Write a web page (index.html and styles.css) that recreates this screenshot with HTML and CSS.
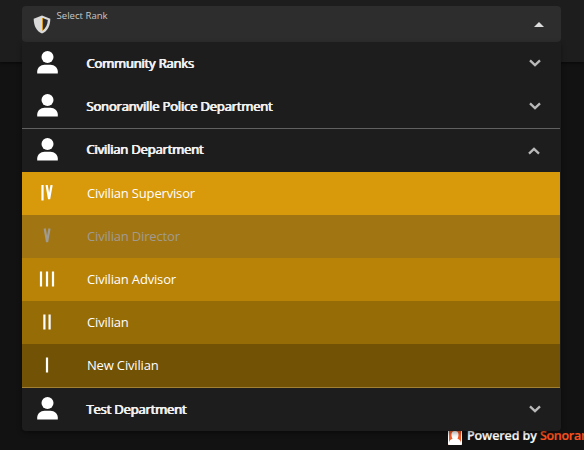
FILE: index.html
```html
<!DOCTYPE html>
<html lang="en">
<head>
<meta charset="utf-8">
<title>Select Rank</title>
<link rel="stylesheet" href="styles.css">
</head>
<body>
<svg class="defs" aria-hidden="true">
  <symbol id="person" viewBox="0 0 21 23"><circle cx="10.500" cy="6" r="6"/><path d="M.2 22.600v-2C.2 16.600 3.500 13.700 7.500 13.700h6c4 0 7.300 2.900 7.300 6.900v2z"/></symbol>
  <symbol id="chevron" viewBox="0 0 12 8"><path d="M1 1.400l5 4.800 5-4.800" fill="none" stroke="currentColor" stroke-width="2.300"/></symbol>
</svg>
<header class="topbar"></header>
<main class="select">
  <div class="field">
    <svg class="shield" viewBox="0 0 18 19"><path d="M9 .5l8.300 3.200C17.300 10.500 14.800 16 9 18.500 3.200 16 .7 10.500.7 3.700z" fill="#d9d9d9"/><path d="M9.500 3l5.300 2.100c-.2 4.500-1.900 8.200-5.300 10.300z" fill="#292d33"/><path d="M9.500 3v12.500" stroke="#d99b16" stroke-width="1"/></svg>
    <span class="label">Select Rank</span>
    <svg class="caret" viewBox="0 0 10 5"><path d="M0 5l5-5 5 5z"/></svg>
  </div>
  <div class="menu">
    <div class="group"><svg class="person"><use href="#person"/></svg><span>Community Ranks</span><svg class="chevron"><use href="#chevron"/></svg></div>
    <div class="group"><svg class="person"><use href="#person"/></svg><span>Sonoranville Police Department</span><svg class="chevron"><use href="#chevron"/></svg></div>
    <div class="group expanded"><svg class="person"><use href="#person"/></svg><span>Civilian Department</span><svg class="chevron open"><use href="#chevron"/></svg></div>
    <div class="rank supervisor"><svg class="numeral" viewBox="0 0 20 16"><path d="M5.500 0v15.500M9.600 0l2.500 14L14.600 0"/></svg><span>Civilian Supervisor</span></div>
    <div class="rank director"><svg class="numeral" viewBox="0 0 20 16"><path d="M7.700.5l2.400 13.500L12.500.5"/></svg><span>Civilian Director</span></div>
    <div class="rank advisor"><svg class="numeral" viewBox="0 0 20 16"><path d="M4 .5v15M10 .5v15M16 .5v15"/></svg><span>Civilian Advisor</span></div>
    <div class="rank civilian"><svg class="numeral" viewBox="0 0 20 16"><path d="M7.400.5v15M12.600.5v15"/></svg><span>Civilian</span></div>
    <div class="rank new"><svg class="numeral" viewBox="0 0 20 16"><path d="M10 .5v15"/></svg><span>New Civilian</span></div>
    <div class="rule"></div>
    <div class="group"><svg class="person"><use href="#person"/></svg><span>Test Department</span><svg class="chevron"><use href="#chevron"/></svg></div>
  </div>
</main>
<footer class="powered">
  <svg class="logo" viewBox="0 0 14 18"><path fill="#f05a28" d="M0 0h14v18H0z"/><path d="M1 17c-.2-3 1.300-4.500 3.500-5.300C2.500 7.500 3.500 4 7 4s4.500 3.500 2.500 7.700C11.700 12.500 13.200 14 13 17z" fill="#fff"/><path d="M.5 3v14.500h13V3" fill="none" stroke="#fff" stroke-width="1"/></svg>
  <span>Powered by <b>Sonoran</b></span>
</footer>
</body>
</html>
```
FILE: styles.css
```css
* { box-sizing: border-box; }
body {
  margin: 0;
  height: 450px;
  overflow: hidden;
  background: #121212;
  color: #fff;
  font: 13px/20px "Open Sans", "Noto Sans", sans-serif;
}
.defs { position: absolute; width: 0; height: 0; }
.topbar {
  height: 62px;
  background: #1d1d1d;
  box-shadow: 0 1px 3px #0009;
}
.select {
  position: relative;
  z-index: 1;
  width: 539px;
  margin: -56px 0 0 22px;
}
.field {
  display: flex;
  height: 36px;
  padding: 0 17.500px 0 11px;
  border-radius: 4px;
  background: #2d2d2d;
}
.shield { width: 18px; height: 19px; margin-top: 9px; }
.label {
  margin: 2px 0 0 5.500px;
  color: #c6c6c6;
  font-size: 9.600px;
  line-height: 15px;
}
.caret { width: 10px; height: 5px; margin: 16px 0 0 auto; fill: #ddd; }
.menu {
  height: 389px;
  padding-right: 1px;
  border-radius: 0 0 4px 4px;
  background: #1d1d1d;
  box-shadow: 0 2px 5px #0006;
}
.group, .rank { display: flex; align-items: center; height: 43px; }
.group { padding: 0 19px 0 15px; }
.group span {
  margin: -2px 0 0 28.500px;
  color: #f2f2f2;
  letter-spacing: -.17px;
  text-shadow: .5px 0 #f2f2f2, -.4px 0 #f2f2f2;
}
.expanded {
  height: 44px;
  padding-bottom: 1px;
  border-top: 1px solid #616161;
}
.person { width: 21px; height: 23px; margin-top: -2px; fill: #fff; }
.chevron { width: 12px; height: 8px; margin: -1px 0 0 auto; color: #b9b9b9; }
.open { margin-top: 1px; transform: translateX(-1px) rotate(180deg); }
.rule { height: 1px; background: #a18035; }
.rank { padding-left: 15px; }
.rank span { margin: -2px 0 0 30px; letter-spacing: -.17px; }
.numeral { width: 20px; height: 16px; margin-top: -1px; fill: none; stroke: currentColor; stroke-width: 2.200; }
.supervisor { background: #d8990b; }
.director { background: #a17512; color: #a09b91; }
.advisor { background: #b98308; }
.civilian { background: #966c07; }
.new { background: #725205; }
.powered {
  display: flex;
  margin: -4px 0 0 448px;
  white-space: nowrap;
  font-size: 12.500px;
  line-height: 18px;
  font-weight: 600;
  letter-spacing: -.1px;
  -webkit-text-stroke: .2px;
}
.logo { width: 14px; height: 18px; flex: none; margin-right: 5px; }
.powered b { color: #fb531d; font-weight: 600; letter-spacing: -.3px; }
```
